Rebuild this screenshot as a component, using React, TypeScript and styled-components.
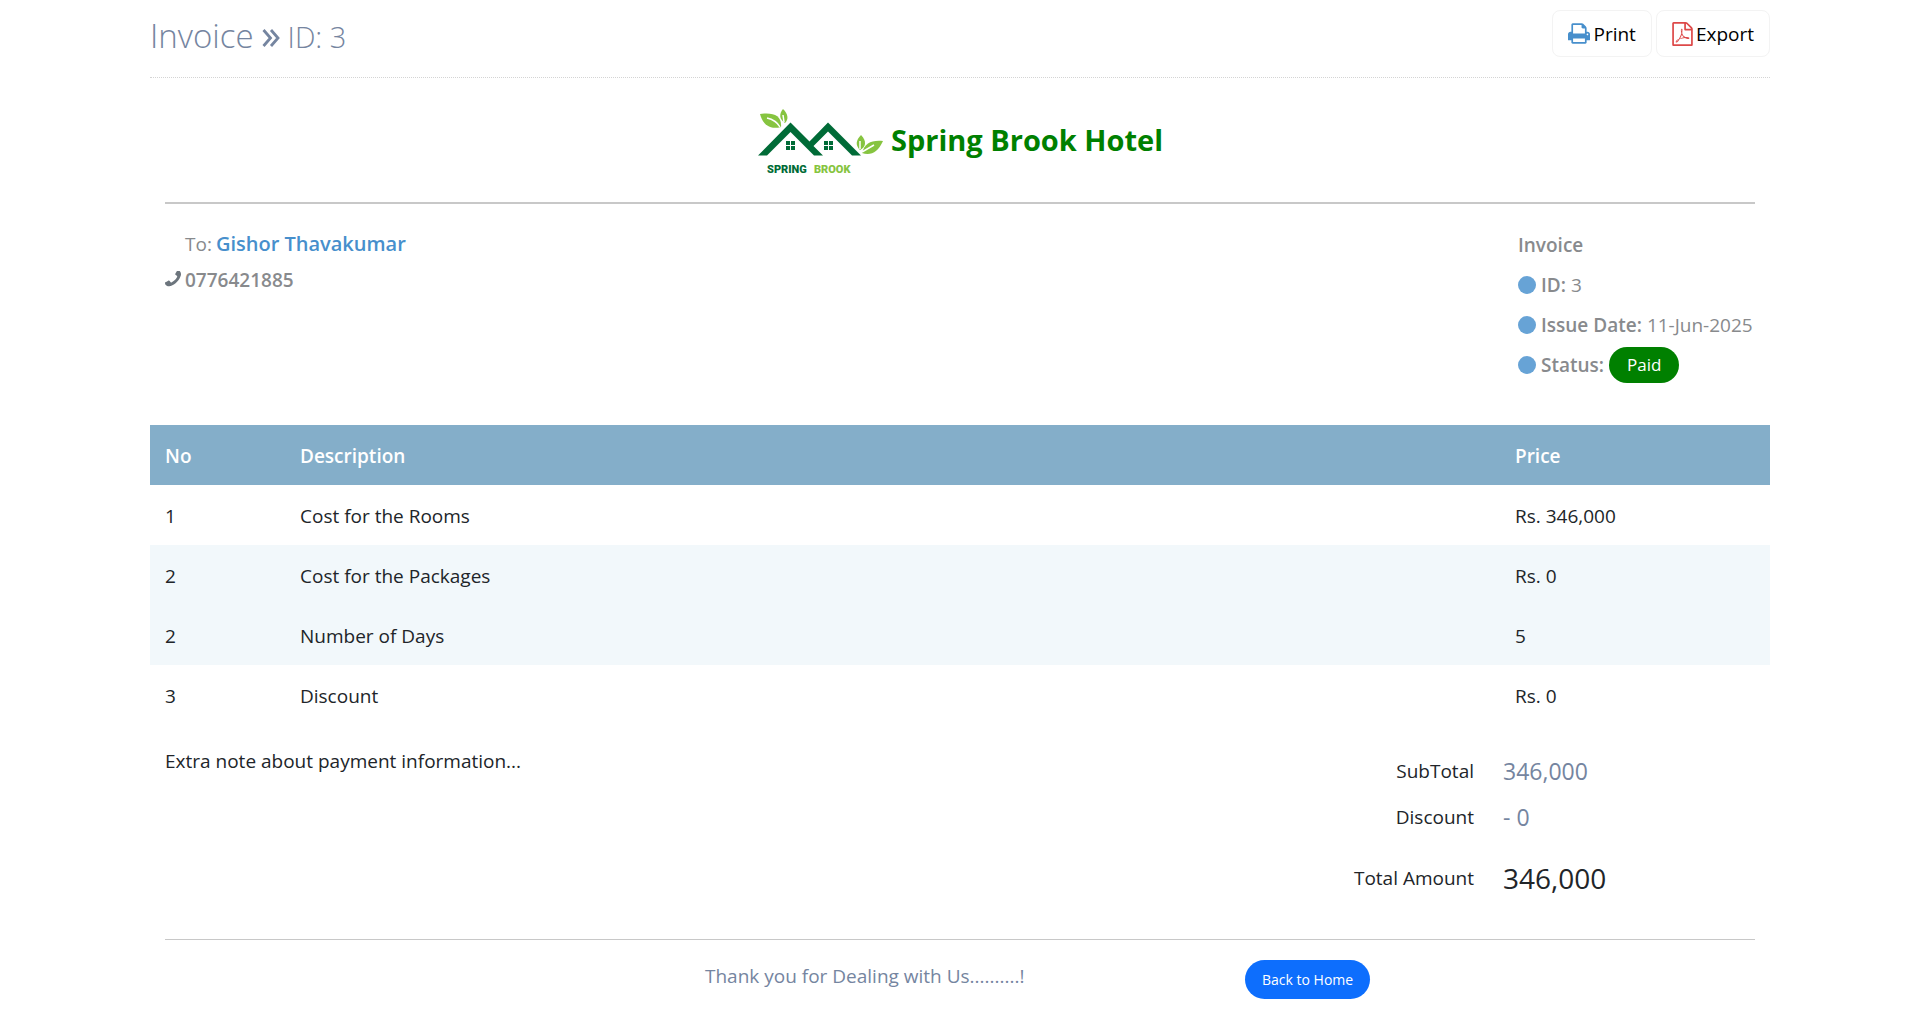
import React from "react";
import styled, { createGlobalStyle } from "styled-components";

const GlobalStyle = createGlobalStyle`
  *, *::before, *::after { box-sizing: border-box; }
  body {
    margin: 0;
    background: #fff;
    color: #212529;
    font-family: "Segoe UI", "Open Sans", "Noto Sans", sans-serif;
    font-size: 19px;
    line-height: 30px;
  }
  h1, h2, p, dl, dd, dt { margin: 0; font-weight: 400; }
`;

const Page = styled.main`
  width: 100%;
  max-width: 1620px;
  margin: 0 auto;
`;

const PageHeader = styled.header`
  display: flex;
  justify-content: space-between;
  align-items: flex-start;
  height: 78px;
  padding-top: 10px;
  border-bottom: 1px dotted #d4d4d4;
`;

const PageTitle = styled.h1`
  display: flex;
  align-items: baseline;
  gap: 8px;
  color: #7585a0;
  font-size: 33px;
  font-weight: 300;
  line-height: 52px;
`;

const TitleId = styled.small`
  font-size: 29px;
`;

const Tools = styled.div`
  display: flex;
  gap: 4px;
`;

const ToolButton = styled.button`
  display: flex;
  align-items: center;
  gap: 3px;
  height: 47px;
  padding: 0 15px;
  border: 1px solid #f3f3f3;
  border-radius: 8px;
  background: #fff;
  color: #000;
  font: inherit;
  cursor: pointer;
`;

const Brand = styled.div`
  display: flex;
  justify-content: center;
  align-items: center;
  gap: 8px;
  height: 126px;
  margin: 0 15px;
  border-bottom: 2px solid #c8c8c8;
`;

const BrandName = styled.h2`
  color: #008000;
  font-size: 29px;
  font-weight: 700;
  line-height: 40px;
`;

const Parties = styled.section`
  display: flex;
  justify-content: space-between;
  padding: 21px 15px 0;
  min-height: 221px;
  color: #888a8d;
`;

const Customer = styled.div`
  display: flex;
  flex-direction: column;
  gap: 6px;
  padding-top: 4px;
`;

const CustomerLine = styled.p<{ $indent?: boolean }>`
  display: flex;
  align-items: baseline;
  gap: 4px;
  padding-left: ${(p) => (p.$indent ? 20 : 0)}px;
`;

const CustomerName = styled.span`
  color: #478fcc;
  font-size: 20px;
  font-weight: 600;
`;

const Strong = styled.span`
  font-weight: 600;
`;

const Facts = styled.div`
  display: flex;
  flex-direction: column;
  min-width: 237px;
`;

const Fact = styled.p`
  display: flex;
  align-items: center;
  gap: 5px;
  height: 40px;
`;

const Dot = styled.span`
  width: 18px;
  height: 18px;
  border-radius: 50%;
  background: #67a3d6;
`;

const Badge = styled.span`
  padding: 0 18px;
  border-radius: 20px;
  background: #008000;
  color: #fff;
  font-size: 17px;
  line-height: 36px;
`;

const Table = styled.table`
  width: 100%;
  border-collapse: collapse;
  table-layout: fixed;
`;

const HeadCell = styled.th<{ $width: string }>`
  width: ${(p) => p.$width};
  height: 60px;
  padding: 2px 15px 0;
  background: #84aec9;
  color: #fff;
  font-weight: 600;
  text-align: left;
`;

const Row = styled.tr<{ $tinted: boolean }>`
  background: ${(p) => (p.$tinted ? "#f2f8fb" : "transparent")};
`;

const Cell = styled.td`
  height: 60px;
  padding: 2px 15px 0;
`;

const Summary = styled.section`
  display: flex;
  justify-content: space-between;
  margin: 0 15px;
  min-height: 215px;
  padding-top: 21px;
  border-bottom: 1px solid #c8c8c8;
`;

const Totals = styled.dl`
  display: grid;
  grid-template-columns: auto 252px;
  grid-template-rows: 46px 46px 75px;
  column-gap: 29px;
  align-items: center;
  padding-top: 2px;
`;

const TotalLabel = styled.dt`
  text-align: right;
`;

const TotalValue = styled.dd<{ $grand?: boolean }>`
  color: ${(p) => (p.$grand ? "#212529" : "#7585a0")};
  font-size: ${(p) => (p.$grand ? 28 : 23)}px;
`;

const Footer = styled.footer`
  display: grid;
  grid-template-columns: repeat(3, 1fr);
  padding-top: 20px;
`;

const FooterCell = styled.div`
  padding: 0 15px;
`;

const Thanks = styled.p`
  color: #7585a0;
  line-height: 32px;
`;

const HomeLink = styled.a`
  display: inline-block;
  padding: 0 17px;
  border-radius: 20px;
  background: #0d6efd;
  color: #fff;
  font-size: 14px;
  line-height: 39px;
  text-decoration: none;
`;

const AngleIcon = () => (
  <svg width="18" height="20" viewBox="0 0 18 20" fill="none" stroke="currentColor" strokeWidth="2.8" aria-hidden="true">
    <path d="M1.500 2 8.500 10 1.500 18M9 2 16 10 9 18" />
  </svg>
);

const PhoneIcon = () => (
  <svg width="16" height="16" viewBox="192 192 1408 1408" fill="#6c757d" aria-hidden="true">
    <path
      transform="translate(1792 0) scale(-1 1)"
      d="M1600 1240q0 27-10 70.500t-21 68.500q-21 50-122 106-94 51-186 51-27 0-53-3.500t-57.500-12.500-47-14.500-55.500-20.500-49-18q-98-35-175-83-127-79-264-216t-216-264q-48-77-83-175-3-9-18-49t-20.500-55.500-14.500-47-12.500-57.500-3.500-53q0-92 51-186 56-101 106-122 25-11 68.500-21t70.500-10q14 0 21 3 18 6 53 76 11 19 30 54t35 63.500 31 53.500q3 4 17.500 25t21.500 35.500 7 28.500q0 20-28.500 50t-62 55-62 53-28.500 46q0 9 5 22.500t8.500 20.500 14 24 11.500 19q76 137 174 235t235 174q2 1 19 11.500t24 14 20.500 8.500 22.500 5q18 0 46-28.500t53-62 55-62 50-28.500q14 0 28.500 7t35.500 21.500 25 17.500q25 15 53.500 31t63.500 35 54 30q70 35 76 53 3 7 3 21z"
    />
  </svg>
);

const PrintIcon = () => (
  <svg width="22" height="21" viewBox="64 128 1664 1536" fill="#478fcc" aria-hidden="true">
    <path d="M448 1536h896v-256h-896v256zm0-640h896v-384h-160q-40 0-68-28t-28-68v-160h-640v640zm1152 64q0-26-19-45t-45-19-45 19-19 45 19 45 45 19 45-19 19-45zm128 0v416q0 13-9.500 22.500t-22.500 9.500h-224v160q0 40-28 68t-68 28h-960q-40 0-68-28t-28-68v-160h-224q-13 0-22.500-9.500t-9.500-22.500v-416q0-79 56.500-135.500t135.500-56.500h64v-544q0-40 28-68t68-28h672q40 0 88 20t76 48l152 152q28 28 48 76t20 88v256h64q79 0 135.500 56.500t56.500 135.500z" />
  </svg>
);

const PdfIcon = () => (
  <svg width="21" height="24" viewBox="128 0 1536 1792" fill="#dd4949" aria-hidden="true">
    <path d="M1596 380q28 28 48 76t20 88v1152q0 40-28 68t-68 28h-1344q-40 0-68-28t-28-68v-1600q0-40 28-68t68-28h896q40 0 88 20t76 48zm-444-244v376h376q-10-29-22-41l-313-313q-12-12-41-22zm384 1528v-1024h-416q-40 0-68-28t-28-68v-416h-768v1536h1280zm-514-593q33 26 84 56 59-7 117-7 147 0 177 49 16 22 2 52 0 1-1 2l-2 2v1q-6 38-71 38-48 0-115-20t-130-53q-221 24-392 83-153 262-242 262-15 0-28-7l-24-12q-1-1-6-5-10-10-6-36 9-40 56-91.500t132-96.500q14-9 23 6 2 2 2 4 52-85 107-197 68-136 104-262-24-82-30.500-159.500t6.500-127.500q11-40 42-40h22q23 0 35 15 18 21 9 68-2 6-4 8 1 3 1 8v30q-2 123-14 192 55 164 146 238zm-576 411q52-24 137-158-51 40-87.500 84t-49.500 74zm398-920q-15 42-2 132 1-7 7-44 0-3 7-43 1-4 4-8-1-1-1-2-1-2-1-3-1-22-13-36 0 1-1 2v2zm-124 661q135-54 284-81-2-1-13-9.500t-16-13.500q-76-67-127-176-27 86-83 197-30 56-45 83zm646-16q-24-24-140-24 76 28 124 28 14 0 18-1 0-1-2-3z" />
  </svg>
);

const Logo = () => (
  <svg width="126" height="70" viewBox="-1 -3 126 70" role="img" aria-label="Spring Brook">
    <g fill="#006b37">
      <path d="M0 47.500 32.500 14.500 51.500 33.500 70 14.500 103 47.500H94L70 23.500 55.500 38 65 47.500H56L32.500 24 9 47.500Z" />
      <path d="M28 33h4v4h-4zM33 33h4v4h-4zM28 38h4v4h-4zM33 38h4v4h-4zM66 33h4v4h-4zM71 33h4v4h-4zM66 38h4v4h-4zM71 38h4v4h-4z" />
    </g>
    <g fill="#86c440">
      <path d="M2 6C16 4 24 8 23 19 12 22 5 17 2 6Z" />
      <path d="M25 1C30 6 31 11 27 15 21 11 21 6 25 1Z" />
      <path d="M103 27C109 33 108 39 102 42 97 37 98 32 103 27Z" />
      <path d="M125 33C120 44 113 48 104 45 107 35 113 32 125 33Z" />
    </g>
    <path d="M9 10Q18 12 22 19M25 7 26 14M102 33 102 41M116 37 104 44" fill="none" stroke="#fff" strokeWidth="1.500" />
    <g fontFamily="Roboto, sans-serif" fontWeight="900" fontSize="11">
      <text x="9" y="65" fill="#006b37">SPRING</text>
      <text x="56" y="65" fill="#86c440">BROOK</text>
    </g>
  </svg>
);

const items = [
  { no: "1", description: "Cost for the Rooms", price: "Rs. 346,000", tinted: false },
  { no: "2", description: "Cost for the Packages", price: "Rs. 0", tinted: true },
  { no: "2", description: "Number of Days", price: "5", tinted: true },
  { no: "3", description: "Discount", price: "Rs. 0", tinted: false },
];

export default function App() {
  return (
    <>
      <GlobalStyle />
      <Page>
        <PageHeader>
          <PageTitle>
            Invoice <AngleIcon /> <TitleId>ID: 3</TitleId>
          </PageTitle>
          <Tools>
            <ToolButton type="button">
              <PrintIcon />
              Print
            </ToolButton>
            <ToolButton type="button">
              <PdfIcon />
              Export
            </ToolButton>
          </Tools>
        </PageHeader>

        <Brand>
          <Logo />
          <BrandName>Spring Brook Hotel</BrandName>
        </Brand>

        <Parties>
          <Customer>
            <CustomerLine $indent>
              To: <CustomerName>Gishor Thavakumar</CustomerName>
            </CustomerLine>
            <CustomerLine>
              <PhoneIcon />
              <Strong>0776421885</Strong>
            </CustomerLine>
          </Customer>
          <Facts>
            <Fact>
              <Strong>Invoice</Strong>
            </Fact>
            <Fact>
              <Dot />
              <Strong>ID:</Strong> 3
            </Fact>
            <Fact>
              <Dot />
              <Strong>Issue Date:</Strong> 11-Jun-2025
            </Fact>
            <Fact>
              <Dot />
              <Strong>Status:</Strong> <Badge>Paid</Badge>
            </Fact>
          </Facts>
        </Parties>

        <Table>
          <thead>
            <tr>
              <HeadCell $width="8.3333%">No</HeadCell>
              <HeadCell $width="75%">Description</HeadCell>
              <HeadCell $width="16.6667%">Price</HeadCell>
            </tr>
          </thead>
          <tbody>
            {items.map((item) => (
              <Row key={item.description} $tinted={item.tinted}>
                <Cell>{item.no}</Cell>
                <Cell>{item.description}</Cell>
                <Cell>{item.price}</Cell>
              </Row>
            ))}
          </tbody>
        </Table>

        <Summary>
          <p>Extra note about payment information...</p>
          <Totals>
            <TotalLabel>SubTotal</TotalLabel>
            <TotalValue>346,000</TotalValue>
            <TotalLabel>Discount</TotalLabel>
            <TotalValue>- 0</TotalValue>
            <TotalLabel>Total Amount</TotalLabel>
            <TotalValue $grand>346,000</TotalValue>
          </Totals>
        </Summary>

        <Footer>
          <FooterCell />
          <FooterCell>
            <Thanks>Thank you for Dealing with Us..........!</Thanks>
          </FooterCell>
          <FooterCell>
            <HomeLink href="#home">Back to Home</HomeLink>
          </FooterCell>
        </Footer>
      </Page>
    </>
  );
}
